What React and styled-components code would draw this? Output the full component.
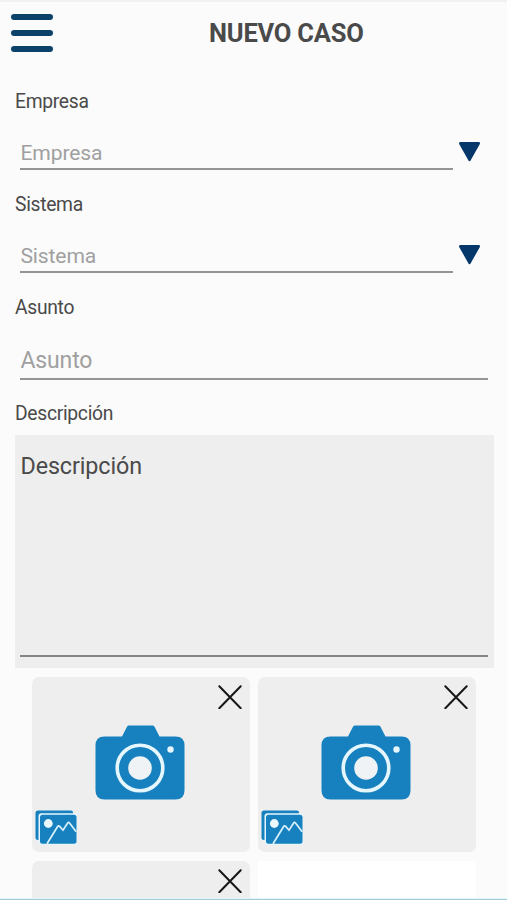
import { useState } from 'react';
import styled, { createGlobalStyle } from 'styled-components';

const GlobalStyle = createGlobalStyle`
    * {
        box-sizing: border-box;
    }
    body {
        margin: 0;
        background: #FBFBFB;
        font-family: Roboto, sans-serif;
        overflow: hidden;
    }
`;

const StyledPage = styled.div`
    display: flex;
    flex-direction: column;
    width: 507px;
    height: 900px;
    overflow: hidden;
    border-top: 2px solid #F1F1F3;
    background: #FBFBFB;
    color: #4A4A4A;
`;

const StyledContent = styled.main`
    flex: 1;
    min-height: 0;
    overflow: hidden;
`;

const StyledBottomLine = styled.div`
    flex: none;
    height: 2px;
    border-top: 1px solid #E0F5F7;
    background: #A3CDD8;
`;

const StyledHeader = styled.header`
    display: grid;
    grid-template-columns: 65px 1fr;
    align-items: center;
    height: 62px;
`;

const StyledMenuButton = styled.button`
    display: flex;
    flex-direction: column;
    justify-content: space-between;
    width: 42px;
    height: 38px;
    margin-left: 11px;
    padding: 0;
    border: none;
    background: none;
`;

const StyledMenuBar = styled.span`
    height: 6px;
    border-radius: 3px;
    background: #0C4269;
`;

const StyledTitle = styled.h1`
    margin: 0 0 0 144px;
    font-size: 25.5px;
    font-weight: 700;
    line-height: 30px;
    letter-spacing: -0.2px;
`;

const StyledForm = styled.form`
    display: flex;
    flex-direction: column;
    padding: 26px 13px 0 15px;
`;

const StyledField = styled.div`
    display: flex;
    flex-direction: column;
    flex: none;
    height: ${({ $height }) => $height}px;
`;

const StyledLabel = styled.label`
    flex: none;
    height: 24px;
    font-size: 19.3px;
    line-height: 24px;
    letter-spacing: -0.3px;
`;

const StyledInputRow = styled.div`
    display: flex;
    align-items: center;
    margin-top: 18px;
    padding-left: 5px;
`;

const StyledInput = styled.input`
    width: ${({ $wide }) => $wide ? 468 : 433}px;
    height: ${({ $wide }) => $wide ? 42 : 38}px;
    padding: 4px 0 0 0.5px;
    border: none;
    border-bottom: 2px solid #959595;
    border-radius: 0;
    outline: none;
    background: transparent;
    color: #4A4A4A;
    font-family: inherit;
    font-size: ${({ $wide }) => $wide ? 23 : 21.1}px;
    letter-spacing: -0.15px;

    &::placeholder {
        color: #A0A0A0;
        opacity: 1;
    }
`;

const StyledArrow = styled.svg`
    flex: none;
    width: 23px;
    height: 21px;
    margin-left: 5px;
`;

const StyledTextBox = styled.div`
    width: 479px;
    height: 233px;
    margin-top: 9px;
    padding: 14px 6px 11px 5px;
    background: #EEEEEE;
`;

const StyledTextArea = styled.textarea`
    display: block;
    width: 100%;
    height: 208px;
    padding: 3px 0 0 0.5px;
    border: none;
    border-bottom: 2px solid #858585;
    outline: none;
    resize: none;
    background: transparent;
    color: #4A4A4A;
    font-family: inherit;
    font-size: 23.3px;
    line-height: 28px;
    letter-spacing: -0.1px;

    &::placeholder {
        color: #4A4A4A;
        opacity: 1;
    }
`;

const StyledPhotoGrid = styled.div`
    display: grid;
    grid-template-columns: 218px 218px;
    grid-auto-rows: 175px;
    gap: 9px 8px;
    margin: 9px 0 0 32px;
`;

const StyledPhotoCard = styled.div`
    display: grid;
    grid-template-rows: 48px 75px 1fr;
    border-radius: ${({ $empty }) => $empty ? 0 : 7}px;
    background: ${({ $empty }) => $empty ? '#FFFFFF' : '#EEEEEE'};
`;

const StyledClose = styled.svg`
    justify-self: end;
    width: 24px;
    height: 24px;
    margin: 8px 8px 0 0;
`;

const StyledCamera = styled.svg`
    justify-self: center;
    width: 90px;
    height: 75px;
    margin-right: 2px;
`;

const StyledGallery = styled.svg`
    align-self: end;
    width: 42px;
    height: 35px;
    margin: 0 0 7px 3px;
`;

const Arrow = () => (
    <StyledArrow viewBox='0 0 23 21'>
        <path d='M2.2 2.3h18.6L11.5 19z' fill='#05376A' stroke='#05376A' strokeWidth='2.4' strokeLinejoin='round' />
    </StyledArrow>
);

const Close = () => (
    <StyledClose viewBox='0 0 24 24'>
        <path d='M1.3 1.3l21.4 21.9M22.7 1.3L1.3 23.2' stroke='#161616' strokeWidth='2' strokeLinecap='round' />
    </StyledClose>
);

const Camera = () => (
    <StyledCamera viewBox='0 0 90 75'>
        <path d='M9.5 11.5h17.5l5-9.8q.6-1.200 2-1.200h23.500q1.400 0 2 1.200l5 9.800h16q9 0 9 9v45q0 9-9 9h-71Q.5 74.500.5 65.500v-45q0-9 9-9z' fill='#1781BF' />
        <circle cx='45' cy='43' r='22.8' fill='none' stroke='#E6F6FD' strokeWidth='3.6' />
        <circle cx='45' cy='43' r='11.8' fill='#F0F3F6' />
        <circle cx='75.5' cy='24.500' r='3.2' fill='#E6F6FD' />
    </StyledCamera>
);

const Gallery = () => (
    <StyledGallery viewBox='0 0 42 35'>
        <path d='M3 .5h33q2 0 2 2V30H3Q.5 30 .5 27.500V3Q.5.5 3 .5z' fill='#1781BF' />
        <rect x='3.5' y='3.2' width='39' height='32' rx='3' fill='#E6F6FD' />
        <rect x='5' y='4.7' width='36.5' height='29' rx='2.5' fill='#1781BF' />
        <circle cx='13.3' cy='13.5' r='4.4' fill='#EAF7FD' />
        <path d='M12 33.700l10.500-17q1-1.500 2.200-.3l3.300 3.800 4.500-7q1-1.500 2.200 0l6.500 8.500' fill='none' stroke='#D9F1FB' strokeWidth='1.7' />
    </StyledGallery>
);

const Field = ({ name, wide, height }) => {
    const [value, setValue] = useState('');

    return (
        <StyledField $height={height}>
            <StyledLabel htmlFor={name}>{name}</StyledLabel>
            <StyledInputRow>
                <StyledInput id={name} $wide={wide} value={value} placeholder={name} onChange={({ target }) => setValue(target.value)} />
                {!wide && <Arrow />}
            </StyledInputRow>
        </StyledField>
    );
}

const PhotoCard = () => (
    <StyledPhotoCard>
        <Close />
        <Camera />
        <Gallery />
    </StyledPhotoCard>
);

const App = () => {
    const [description, setDescription] = useState('');

    return (
        <StyledPage>
            <GlobalStyle />
            <StyledContent>
                <StyledHeader>
                    <StyledMenuButton type='button'>
                        <StyledMenuBar />
                        <StyledMenuBar />
                        <StyledMenuBar />
                    </StyledMenuButton>
                    <StyledTitle>NUEVO CASO</StyledTitle>
                </StyledHeader>
                <StyledForm>
                    <Field name='Empresa' height={103} />
                    <Field name='Sistema' height={103} />
                    <Field name='Asunto' height={106} wide />
                    <StyledLabel htmlFor='description'>Descripción</StyledLabel>
                    <StyledTextBox>
                        <StyledTextArea id='description' value={description} placeholder='Descripción' onChange={({ target }) => setDescription(target.value)} />
                    </StyledTextBox>
                </StyledForm>
                <StyledPhotoGrid>
                    <PhotoCard />
                    <PhotoCard />
                    <PhotoCard />
                    <StyledPhotoCard $empty />
                </StyledPhotoGrid>
            </StyledContent>
            <StyledBottomLine />
        </StyledPage>
    );
}

export default App;
